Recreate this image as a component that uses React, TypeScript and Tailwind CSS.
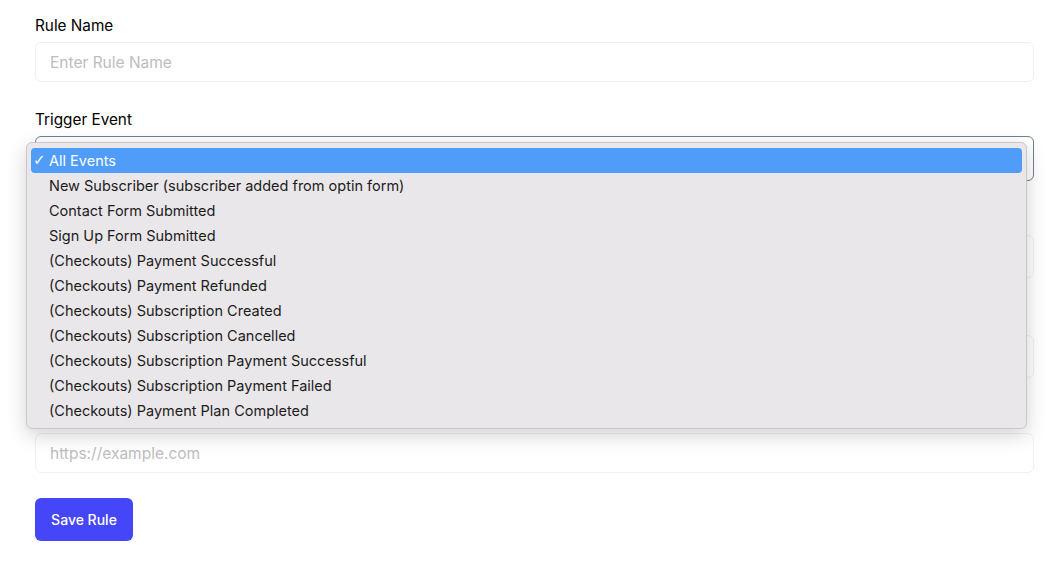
const events = [
  "All Events",
  "New Subscriber (subscriber added from optin form)",
  "Contact Form Submitted",
  "Sign Up Form Submitted",
  "(Checkouts) Payment Successful",
  "(Checkouts) Payment Refunded",
  "(Checkouts) Subscription Created",
  "(Checkouts) Subscription Cancelled",
  "(Checkouts) Subscription Payment Successful",
  "(Checkouts) Subscription Payment Failed",
  "(Checkouts) Payment Plan Completed",
];

function Field({ label, className, children }: { label?: string; className: string; children: React.ReactNode }) {
  return (
    <div className={className}>
      {/* labels hidden behind the open menu are left empty */}
      <label className="block h-6 text-[15.3px] leading-6 text-black">{label}</label>
      <div className="mt-1">{children}</div>
    </div>
  );
}

export default function App() {
  return (
    <div className="relative min-h-[568px] bg-white font-['Inter','Liberation_Sans',sans-serif]">
      <div className="px-[35px] pt-[14px] pr-[22px]">
        <Field label="Rule Name" className="mb-[26px]">
          <input
            placeholder="Enter Rule Name"
            className="h-10 w-full rounded-md border border-[#f0f0f0] px-[14px] text-[15.5px] text-gray-800 placeholder:text-[#bdbdbd] outline-none"
          />
        </Field>

        <Field label="Trigger Event" className="mb-[26px]">
          <div className="h-[45px] w-full rounded-md border border-[#6f8196] bg-white" />
        </Field>

        <Field className="mb-[29px]">
          <div className="h-[43px] w-full rounded-md border border-[#f0f0f0]" />
        </Field>

        <Field className="mb-[27px]">
          <div className="h-[43px] w-full rounded-md border border-[#f0f0f0]" />
        </Field>

        <Field className="mb-[25px]">
          <input
            placeholder="https://example.com"
            className="h-10 w-full rounded-md border border-[#f0f0f0] px-[14px] text-[15.5px] text-gray-800 placeholder:text-[#bdbdbd] outline-none"
          />
        </Field>

        <button className="h-[43px] w-[98px] rounded-md bg-[#4546f7] text-sm font-medium text-white">
          Save Rule
        </button>
      </div>

      {/* open select menu */}
      <div className="absolute left-[26px] top-[142px] w-[1001px] rounded-md border border-[#c9c7c9] bg-[#eae7ea] px-[4px] pt-[5px] pb-[5px] shadow-[0_6px_20px_rgba(0,0,0,0.18)]">
        {events.map((ev, i) => (
          <div
            key={ev}
            className={`flex h-[25px] items-center text-[14.5px] ${
              i === 0 ? "rounded-[4px] bg-[#4f9cf9] text-white" : "text-[#1c1c1c]"
            }`}
          >
            <span className="w-[18px] pl-[2px] font-['DejaVu_Sans',sans-serif] text-[15px] leading-none">{i === 0 ? "✓" : ""}</span>
            <span>{ev}</span>
          </div>
        ))}
      </div>
    </div>
  );
}
